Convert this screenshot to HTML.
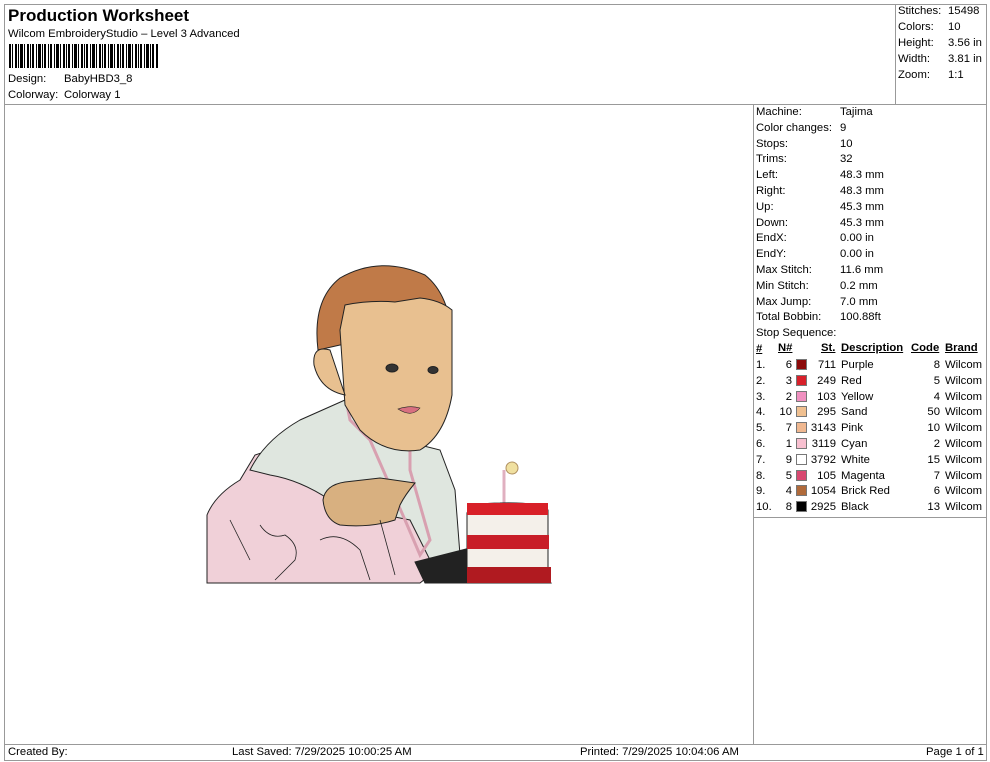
<!DOCTYPE html>
<html><head><meta charset="utf-8"><style>
body{margin:0;background:#fff;width:990px;height:762px;position:relative;overflow:hidden;font-family:"Liberation Sans",Arial,sans-serif;font-size:11.3px;color:#000}
.a{position:absolute;white-space:nowrap}
.l{position:absolute;background:#999}
.sw{position:absolute;width:9px;height:9px;border:1px solid #777}
u{text-decoration:underline}
</style></head><body>
<div class="l" style="left:4px;top:4px;width:983px;height:1px"></div>
<div class="l" style="left:4px;top:760px;width:983px;height:1px"></div>
<div class="l" style="left:4px;top:4px;width:1px;height:757px"></div>
<div class="l" style="left:986px;top:4px;width:1px;height:757px"></div>
<div class="l" style="left:4px;top:104px;width:983px;height:1px"></div>
<div class="l" style="left:895px;top:4px;width:1px;height:100px"></div>
<div class="l" style="left:753px;top:104px;width:1px;height:640px"></div>
<div class="l" style="left:753px;top:517px;width:234px;height:1px"></div>
<div class="l" style="left:4px;top:744px;width:983px;height:1px"></div>

<div class="a" style="left:8px;top:6px;font-size:17px;font-weight:bold">Production Worksheet</div>
<div class="a" style="left:8px;top:28px">Wilcom EmbroideryStudio – Level 3 Advanced</div>
<svg class="a" style="left:9px;top:44px" width="150" height="24">
<g fill="#000">
<rect x="0" width="2" height="24"/><rect x="3" width="1" height="24"/><rect x="6" width="2" height="24"/><rect x="9" width="1" height="24"/><rect x="11" width="3" height="24"/><rect x="15" width="1" height="24"/><rect x="18" width="2" height="24"/><rect x="21" width="1" height="24"/><rect x="23" width="2" height="24"/><rect x="27" width="1" height="24"/><rect x="29" width="3" height="24"/><rect x="33" width="1" height="24"/><rect x="35" width="2" height="24"/><rect x="39" width="1" height="24"/><rect x="41" width="2" height="24"/><rect x="45" width="1" height="24"/><rect x="47" width="3" height="24"/><rect x="51" width="1" height="24"/><rect x="54" width="2" height="24"/><rect x="57" width="1" height="24"/><rect x="59" width="2" height="24"/><rect x="63" width="1" height="24"/><rect x="65" width="3" height="24"/><rect x="69" width="1" height="24"/><rect x="72" width="2" height="24"/><rect x="75" width="1" height="24"/><rect x="77" width="2" height="24"/><rect x="81" width="1" height="24"/><rect x="83" width="3" height="24"/><rect x="87" width="1" height="24"/><rect x="90" width="2" height="24"/><rect x="93" width="1" height="24"/><rect x="95" width="2" height="24"/><rect x="99" width="1" height="24"/><rect x="101" width="3" height="24"/><rect x="105" width="1" height="24"/><rect x="108" width="2" height="24"/><rect x="111" width="1" height="24"/><rect x="113" width="2" height="24"/><rect x="117" width="1" height="24"/><rect x="119" width="3" height="24"/><rect x="123" width="1" height="24"/><rect x="126" width="2" height="24"/><rect x="129" width="1" height="24"/><rect x="131" width="2" height="24"/><rect x="135" width="1" height="24"/><rect x="137" width="3" height="24"/><rect x="141" width="1" height="24"/><rect x="143" width="2" height="24"/><rect x="147" width="2" height="24"/>
</g></svg>
<div class="a" style="left:8px;top:73px">Design:</div><div class="a" style="left:64px;top:73px">BabyHBD3_8</div>
<div class="a" style="left:8px;top:89px">Colorway:</div><div class="a" style="left:64px;top:89px">Colorway 1</div>

<div class="a" style="left:898px;top:5px">Stitches:</div><div class="a" style="left:948px;top:5px">15498</div>
<div class="a" style="left:898px;top:21px">Colors:</div><div class="a" style="left:948px;top:21px">10</div>
<div class="a" style="left:898px;top:37px">Height:</div><div class="a" style="left:948px;top:37px">3.56 in</div>
<div class="a" style="left:898px;top:53px">Width:</div><div class="a" style="left:948px;top:53px">3.81 in</div>
<div class="a" style="left:898px;top:69px">Zoom:</div><div class="a" style="left:948px;top:69px">1:1</div>

<div class="a" style="left:756px;top:105px;line-height:15.8px">Machine:<br>Color changes:<br>Stops:<br>Trims:<br>Left:<br>Right:<br>Up:<br>Down:<br>EndX:<br>EndY:<br>Max Stitch:<br>Min Stitch:<br>Max Jump:<br>Total Bobbin:<br>Stop Sequence:</div>
<div class="a" style="left:840px;top:105px;line-height:15.8px">Tajima<br>9<br>10<br>32<br>48.3 mm<br>48.3 mm<br>45.3 mm<br>45.3 mm<br>0.00 in<br>0.00 in<br>11.6 mm<br>0.2 mm<br>7.0 mm<br>100.88ft</div>

<div class="a" style="left:756px;top:342px;line-height:15.8px;font-weight:bold"><u>#</u></div>
<div class="a" style="left:778px;top:342px;font-weight:bold"><u>N#</u></div>
<div class="a" style="left:821px;top:342px;font-weight:bold"><u>St.</u></div>
<div class="a" style="left:841px;top:342px;font-weight:bold"><u>Description</u></div>
<div class="a" style="left:911px;top:342px;font-weight:bold"><u>Code</u></div>
<div class="a" style="left:945px;top:342px;font-weight:bold"><u>Brand</u></div>
<div class="a" style="left:756px;top:358px;line-height:15.8px">1.<br>2.<br>3.<br>4.<br>5.<br>6.<br>7.<br>8.<br>9.<br>10.</div>
<div class="a" style="left:770px;top:358px;line-height:15.8px;width:22px;text-align:right">6<br>3<br>2<br>10<br>7<br>1<br>9<br>5<br>4<br>8</div>
<div class="a" style="left:806px;top:358px;line-height:15.8px;width:30px;text-align:right">711<br>249<br>103<br>295<br>3143<br>3119<br>3792<br>105<br>1054<br>2925</div>
<div class="a" style="left:841px;top:358px;line-height:15.8px">Purple<br>Red<br>Yellow<br>Sand<br>Pink<br>Cyan<br>White<br>Magenta<br>Brick Red<br>Black</div>
<div class="a" style="left:905px;top:358px;line-height:15.8px;width:35px;text-align:right">8<br>5<br>4<br>50<br>10<br>2<br>15<br>7<br>6<br>13</div>
<div class="a" style="left:945px;top:358px;line-height:15.8px">Wilcom<br>Wilcom<br>Wilcom<br>Wilcom<br>Wilcom<br>Wilcom<br>Wilcom<br>Wilcom<br>Wilcom<br>Wilcom</div>
<div class="sw" style="left:796px;top:359px;background:#8b0a0a"></div>
<div class="sw" style="left:796px;top:375px;background:#d8202a"></div>
<div class="sw" style="left:796px;top:391px;background:#f090c0"></div>
<div class="sw" style="left:796px;top:406px;background:#f0c090"></div>
<div class="sw" style="left:796px;top:422px;background:#f0b890"></div>
<div class="sw" style="left:796px;top:438px;background:#f8c0d0"></div>
<div class="sw" style="left:796px;top:454px;background:#fff"></div>
<div class="sw" style="left:796px;top:470px;background:#d84870"></div>
<div class="sw" style="left:796px;top:485px;background:#b06a3a"></div>
<div class="sw" style="left:796px;top:501px;background:#000"></div>

<div class="a" style="left:8px;top:746px">Created By:</div>
<div class="a" style="left:232px;top:746px">Last Saved: 7/29/2025 10:00:25 AM</div>
<div class="a" style="left:580px;top:746px">Printed: 7/29/2025 10:04:06 AM</div>
<div class="a" style="left:926px;top:746px">Page 1 of 1</div>

<svg class="a" style="left:0;top:0" width="753" height="744" stroke="#222" stroke-width="1">
<path d="M207,583 L207,515 Q215,495 240,480 L255,455 L300,440 L330,420 L420,440 L440,470 L450,500 L455,555 L420,583 Z" fill="#f0d0d8"/>
<path d="M250,470 Q265,440 300,420 L345,400 L400,440 L440,450 L455,490 L460,555 L430,560 L410,520 L360,510 L330,500 Q300,480 270,475 Z" fill="#dfe6df"/>
<path d="M345,395 L350,420 L370,440 L405,520 L420,555 L430,540 L410,470 L410,440" fill="none" stroke="#d8a0b0" stroke-width="3"/>
<path d="M318,350 Q312,300 340,278 Q380,255 425,275 Q450,295 452,340 L340,345 Z" fill="#c07a48"/>
<path d="M340,330 L345,305 Q370,300 395,302 L420,298 Q440,300 452,310 L452,395 Q445,435 420,450 Q385,455 360,430 L345,405 Z" fill="#e8c090"/>
<path d="M330,350 Q312,345 314,365 Q320,390 345,395 Z" fill="#e8c090"/>
<path d="M398,409 Q410,405 420,408 Q412,418 398,409 Z" fill="#d87080" stroke-width="0.6"/>
<ellipse cx="392" cy="368" rx="6" ry="4" fill="#333"/><ellipse cx="433" cy="370" rx="5" ry="3.5" fill="#333"/>
<path d="M323,500 Q325,485 345,482 L380,478 L415,483 Q405,495 400,505 L395,520 Q370,528 340,525 Q325,520 323,500 Z" fill="#d8b080"/>
<path d="M260,525 Q270,540 285,535 Q300,545 295,560 L275,580 M320,540 Q340,530 360,550 L370,580 M230,520 L250,560 M380,520 L395,575" fill="none" stroke-width="0.8"/>
<path d="M415,562 L470,548 L475,583 L425,583 Z" fill="#222"/>
<line x1="504" y1="470" x2="504" y2="508" stroke="#e0b0c0" stroke-width="3"/>
<circle cx="512" cy="468" r="6" fill="#f0e0a0" stroke="#b09060"/>
<path d="M467,513 Q470,503 500,503 Q540,502 548,510 L548,578 L551,583 L470,583 L467,578 Z" fill="#f4f0ea"/>
<rect x="467" y="503" width="81" height="12" fill="#d82028" stroke="none"/>
<rect x="467" y="535" width="82" height="14" fill="#c81e28" stroke="none"/>
<rect x="467" y="567" width="84" height="16" fill="#b01a20" stroke="none"/>
</svg>
</body></html>
